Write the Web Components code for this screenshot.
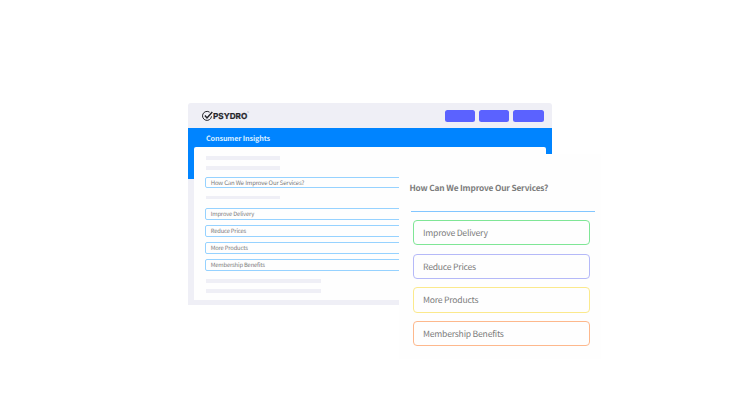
<!DOCTYPE html>
<html lang="en">
<head>
<meta charset="utf-8">
<title>Psydro Consumer Insights</title>
<style>
    body {
        margin: 0;
        background: #fff;
        font-family: "Noto Sans CJK SC", "Noto Sans", sans-serif;
        color: #7b7b7b;
        text-rendering: geometricPrecision;
    }
</style>
</head>
<body>

<insights-scene></insights-scene>

<script>
const define = (name, html) => {
    const template = document.createElement('template')
    template.innerHTML = html

    window.customElements.define(name, class extends HTMLElement {
        constructor() {
            super();
            this.attachShadow({mode: 'open'});
            this.shadowRoot.appendChild(template.content.cloneNode(true));
        }
    })
}

define('psydro-logo', `
    <style>
    :host {
        display: flex;
        align-items: center;
        height: 12px;
        color: #25252b;
    }
    svg {
        width: 11px;
        height: 12px;
        flex: none;
    }
    .name {
        font: 700 8.2px/12px Inter, sans-serif;
        -webkit-text-stroke: .2px;
    }
    .tm {
        font: 3px/3px Inter, sans-serif;
        align-self: flex-start;
        margin-top: 2px;
    }
    </style>
    <svg viewBox="0 0 11 12" fill="none" stroke="currentColor">
        <path d="M7.6 2.2A4.5 4.5 0 1 0 9.5 6.3" stroke-width="1"/>
        <path d="M2.9 5.5L5 7.9L10.3 2" stroke-width="1.5"/>
    </svg>
    <span class="name">PSYDRO</span><span class="tm">™</span>
`)

define('nav-button', `
    <style>
    :host {
        display: block;
        width: 30.5px;
        height: 12px;
        border-radius: 2.5px;
        background: #5b62ff;
    }
    </style>
`)

define('skeleton-bar', `
    <style>
    :host {
        display: block;
        width: var(--bar-width, 74px);
        height: 3.5px;
        margin-left: 1px;
        background: #efeff6;
    }
    </style>
`)

define('form-field', `
    <style>
    :host {
        display: block;
        box-sizing: border-box;
        height: var(--field-height, 12px);
        padding-left: 4.7px;
        border: 1px solid #96d2ff;
        border-radius: 2px;
        font-size: 5.8px;
        letter-spacing: -.16px;
        line-height: calc(var(--field-height, 12px) - 2px);
        white-space: nowrap;
    }
    </style>
    <slot></slot>
`)

define('answer-option', `
    <style>
    :host {
        display: block;
        box-sizing: border-box;
        height: 25.4px;
        padding-left: 9px;
        border: 1px solid var(--accent);
        border-radius: 4px;
        font-size: 8.6px;
        letter-spacing: -.21px;
        line-height: 24.4px;
        white-space: nowrap;
    }
    </style>
    <slot></slot>
`)

define('app-window', `
    <style>
    :host {
        display: block;
        width: 364px;
        height: 202px;
        border-radius: 3px 3px 0 0;
        background: linear-gradient(#0084ff, #0084ff) 0 25px / 100% 51px no-repeat #efeff6;
        overflow: hidden;
    }
    header {
        display: flex;
        align-items: center;
        justify-content: space-between;
        box-sizing: border-box;
        height: 25px;
        padding: 1px 8.4px 0 14px;
    }
    nav {
        display: flex;
        gap: 3.7px;
    }
    h1 {
        height: 19px;
        margin: 0;
        padding-left: 18px;
        font-size: 7.2px;
        letter-spacing: -.12px;
        line-height: 22.4px;
        font-weight: 700;
        color: #d9edff;
    }
    main {
        box-sizing: border-box;
        height: 153px;
        margin: 0 6px;
        padding: 9px 0 0 11px;
        border-radius: 2px 2px 0 0;
        background: #fefefe;
    }
    </style>
    <header>
        <psydro-logo></psydro-logo>
        <nav>
            <nav-button></nav-button>
            <nav-button></nav-button>
            <nav-button></nav-button>
        </nav>
    </header>
    <h1>Consumer Insights</h1>
    <main><slot></slot></main>
`)

define('question-card', `
    <style>
    :host {
        display: block;
        box-sizing: border-box;
        width: 202px;
        height: 205px;
        padding: 24px 6px 0 10px;
        background: #fefefe;
    }
    h2 {
        margin: 0;
        padding-left: .5px;
        font-size: 8.3px;
        letter-spacing: -.16px;
        line-height: 20px;
        font-weight: 700;
        white-space: nowrap;
    }
    hr {
        height: 1px;
        margin: 13px 0 0 2px;
        border: 0;
        background: #82c6ff;
    }
    .options {
        display: flex;
        flex-direction: column;
        gap: 8.2px;
        margin: 8px 5px 0 4px;
    }
    </style>
    <h2><slot name="question"></slot></h2>
    <hr>
    <div class="options"><slot></slot></div>
`)

define('insights-scene', `
    <style>
    :host {
        display: block;
        position: relative;
        box-sizing: border-box;
        width: 740px;
        height: 416px;
        padding: 103px 0 0 188px;
        overflow: hidden;
    }
    .form {
        display: flex;
        flex-direction: column;
    }
    .form skeleton-bar + skeleton-bar { margin-top: 6.5px; }
    .form .question {
        --field-height: 11px;
        margin: 7.5px 0;
        font-size: 6px;
    }
    .form .choices {
        display: flex;
        flex-direction: column;
        gap: 5px;
        margin: 9px 0 8px;
    }
    .wide { --bar-width: 115px; }
    /* card floats over the right side of the window */
    question-card {
        position: absolute;
        left: 399px;
        top: 154px;
    }
    </style>
    <app-window>
        <div class="form">
            <skeleton-bar></skeleton-bar>
            <skeleton-bar></skeleton-bar>
            <form-field class="question">How Can We Improve Our Services?</form-field>
            <skeleton-bar></skeleton-bar>
            <div class="choices">
                <form-field>Improve Delivery</form-field>
                <form-field>Reduce Prices</form-field>
                <form-field>More Products</form-field>
                <form-field>Membership Benefits</form-field>
            </div>
            <skeleton-bar class="wide"></skeleton-bar>
            <skeleton-bar class="wide"></skeleton-bar>
        </div>
    </app-window>
    <question-card>
        <span slot="question">How Can We Improve Our Services?</span>
        <answer-option style="--accent: #7fe696">Improve Delivery</answer-option>
        <answer-option style="--accent: #b5b9f8">Reduce Prices</answer-option>
        <answer-option style="--accent: #fbe98c">More Products</answer-option>
        <answer-option style="--accent: #fdb88c">Membership Benefits</answer-option>
    </question-card>
`)
</script>
</body>
</html>
